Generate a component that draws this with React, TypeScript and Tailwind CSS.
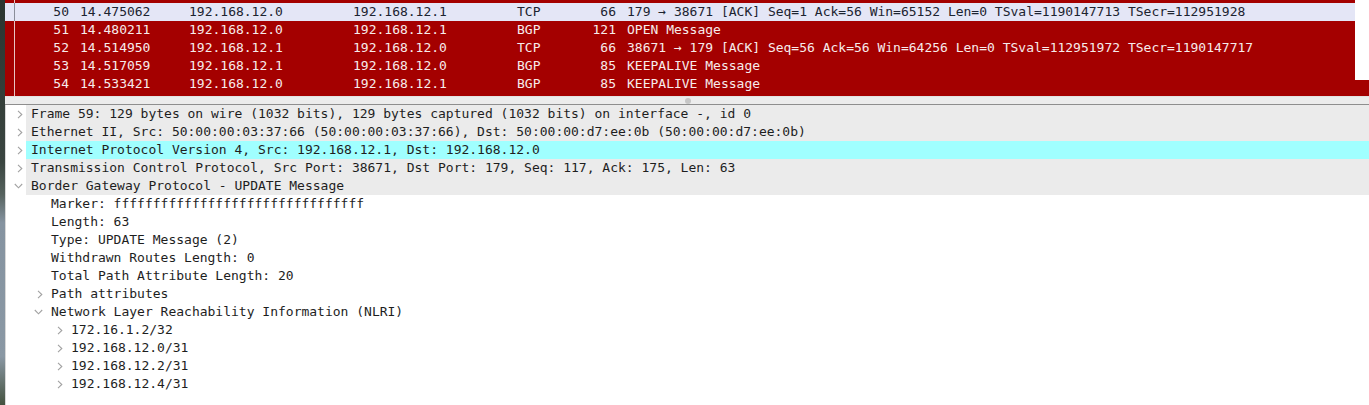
import React from "react";

type Pkt = {
  no: number | string;
  time: string;
  src: string;
  dst: string;
  proto: string;
  len: number | string;
  info: string;
  selected?: boolean;
};

const packets: Pkt[] = [
  { no: "", time: "", src: "", dst: "", proto: "", len: "", info: "" },
  { no: 50, time: "14.475062", src: "192.168.12.0", dst: "192.168.12.1", proto: "TCP", len: 66, info: "179 → 38671 [ACK] Seq=1 Ack=56 Win=65152 Len=0 TSval=1190147713 TSecr=112951928", selected: true },
  { no: 51, time: "14.480211", src: "192.168.12.0", dst: "192.168.12.1", proto: "BGP", len: 121, info: "OPEN Message" },
  { no: 52, time: "14.514950", src: "192.168.12.1", dst: "192.168.12.0", proto: "TCP", len: 66, info: "38671 → 179 [ACK] Seq=56 Ack=56 Win=64256 Len=0 TSval=112951972 TSecr=1190147717" },
  { no: 53, time: "14.517059", src: "192.168.12.1", dst: "192.168.12.0", proto: "BGP", len: 85, info: "KEEPALIVE Message" },
  { no: 54, time: "14.533421", src: "192.168.12.0", dst: "192.168.12.1", proto: "BGP", len: 85, info: "KEEPALIVE Message" },
  { no: 55, time: "14.533457", src: "192.168.12.1", dst: "192.168.12.0", proto: "TCP", len: 66, info: "38671 → 179 [ACK] Seq=75 Ack=75 Win=64256 Len=0 TSval=112951990 TSecr=1190147733" },
];

type Node = {
  text: string;
  depth: number;
  chevron?: "right" | "down";
  top?: boolean;
  highlight?: boolean;
};

const details: Node[] = [
  { text: "Frame 59: 129 bytes on wire (1032 bits), 129 bytes captured (1032 bits) on interface -, id 0", depth: 0, chevron: "right", top: true },
  { text: "Ethernet II, Src: 50:00:00:03:37:66 (50:00:00:03:37:66), Dst: 50:00:00:d7:ee:0b (50:00:00:d7:ee:0b)", depth: 0, chevron: "right", top: true },
  { text: "Internet Protocol Version 4, Src: 192.168.12.1, Dst: 192.168.12.0", depth: 0, chevron: "right", top: true, highlight: true },
  { text: "Transmission Control Protocol, Src Port: 38671, Dst Port: 179, Seq: 117, Ack: 175, Len: 63", depth: 0, chevron: "right", top: true },
  { text: "Border Gateway Protocol - UPDATE Message", depth: 0, chevron: "down", top: true },
  { text: "Marker: ffffffffffffffffffffffffffffffff", depth: 1 },
  { text: "Length: 63", depth: 1 },
  { text: "Type: UPDATE Message (2)", depth: 1 },
  { text: "Withdrawn Routes Length: 0", depth: 1 },
  { text: "Total Path Attribute Length: 20", depth: 1 },
  { text: "Path attributes", depth: 1, chevron: "right" },
  { text: "Network Layer Reachability Information (NLRI)", depth: 1, chevron: "down" },
  { text: "172.16.1.2/32", depth: 2, chevron: "right" },
  { text: "192.168.12.0/31", depth: 2, chevron: "right" },
  { text: "192.168.12.2/31", depth: 2, chevron: "right" },
  { text: "192.168.12.4/31", depth: 2, chevron: "right" },
];

function Chevron({ dir }: { dir: "right" | "down" }) {
  if (dir === "right") {
    return (
      <svg width="6" height="9" viewBox="0 0 6 9" className="block">
        <path d="M1 0.8 L4.8 4.5 L1 8.2" fill="none" stroke="#a2a2a2" strokeWidth="1.1" />
      </svg>
    );
  }
  return (
    <svg width="9" height="6" viewBox="0 0 9 6" className="block">
      <path d="M0.8 1 L4.5 4.8 L8.2 1" fill="none" stroke="#a2a2a2" strokeWidth="1.1" />
    </svg>
  );
}

function PacketRow({ p }: { p: Pkt }) {
  const sel = !!p.selected;
  return (
    <div
      className={`flex h-[18px] items-center whitespace-pre ${
        sel ? "bg-[#e4e6f6] text-[#1c2330]" : "bg-[#a40000] text-[#f7ebeb]"
      }`}
    >
      <div className={`h-full w-[10px] shrink-0 border-r ${sel ? "border-[#8a8d99]" : "border-[#e8c4c4]"}`} />
      <div className="w-[54px] shrink-0 text-right">{p.no}</div>
      <div className="w-[120px] shrink-0 pl-[11px]">{p.time}</div>
      <div className="w-[164px] shrink-0">{p.src}</div>
      <div className="w-[164px] shrink-0">{p.dst}</div>
      <div className="w-[63px] shrink-0">{p.proto}</div>
      <div className="w-[36px] shrink-0 text-right">{p.len}</div>
      <div className="flex-1 pl-[11px]">{p.info}</div>
    </div>
  );
}

function DetailRow({ n }: { n: Node }) {
  const spacer = n.depth === 0 ? "w-[20px]" : n.depth === 1 ? "w-[40px]" : "w-[60px]";
  const bg = n.highlight ? "bg-[#a0ffff]" : n.top ? "bg-[#ebebeb]" : "";
  return (
    <div className="flex h-[18px] items-center whitespace-pre">
      <div className={`flex h-full shrink-0 items-center justify-end pr-[3px] ${spacer}`}>
        {n.chevron ? <Chevron dir={n.chevron} /> : null}
      </div>
      <div className={`flex h-full flex-1 items-center pl-[5px] ${bg}`}>{n.text}</div>
    </div>
  );
}

export default function App() {
  return (
    <div className="flex h-[405px] w-[1369px] overflow-hidden bg-white font-['DejaVu_Sans_Mono',monospace] text-[13px] leading-[18px]">
      <div className="h-full w-[5px] shrink-0 bg-[linear-gradient(to_bottom,#2b3530_0%,#3a4540_40%,#56625e_48%,#8593a0_55%,#8a98a4_88%,#44523f_100%)]" />
      <div className="flex h-full flex-1 flex-col">
        <div className="relative h-[96px] shrink-0 overflow-hidden bg-[#a40000]">
          <div className="mt-[-15px]">
            {packets.map((p, i) => (
              <PacketRow key={i} p={p} />
            ))}
          </div>
          <div className="absolute right-0 top-0 h-[80px] w-[14px] bg-white" />
        </div>
        <div className="relative h-[9px] shrink-0 border-b border-t border-b-[#8e8e8e] border-t-[#e2e2e2] bg-[#ececec]">
          <div className="absolute left-[680px] top-[1px] h-[6px] w-[6px] rounded-full bg-[#c6c6c6]" />
        </div>
        <div className="flex-1 border-l border-[#d8d8d8] bg-white text-[#1e1e1e]">
          {details.map((n, i) => (
            <DetailRow key={i} n={n} />
          ))}
        </div>
      </div>
    </div>
  );
}
